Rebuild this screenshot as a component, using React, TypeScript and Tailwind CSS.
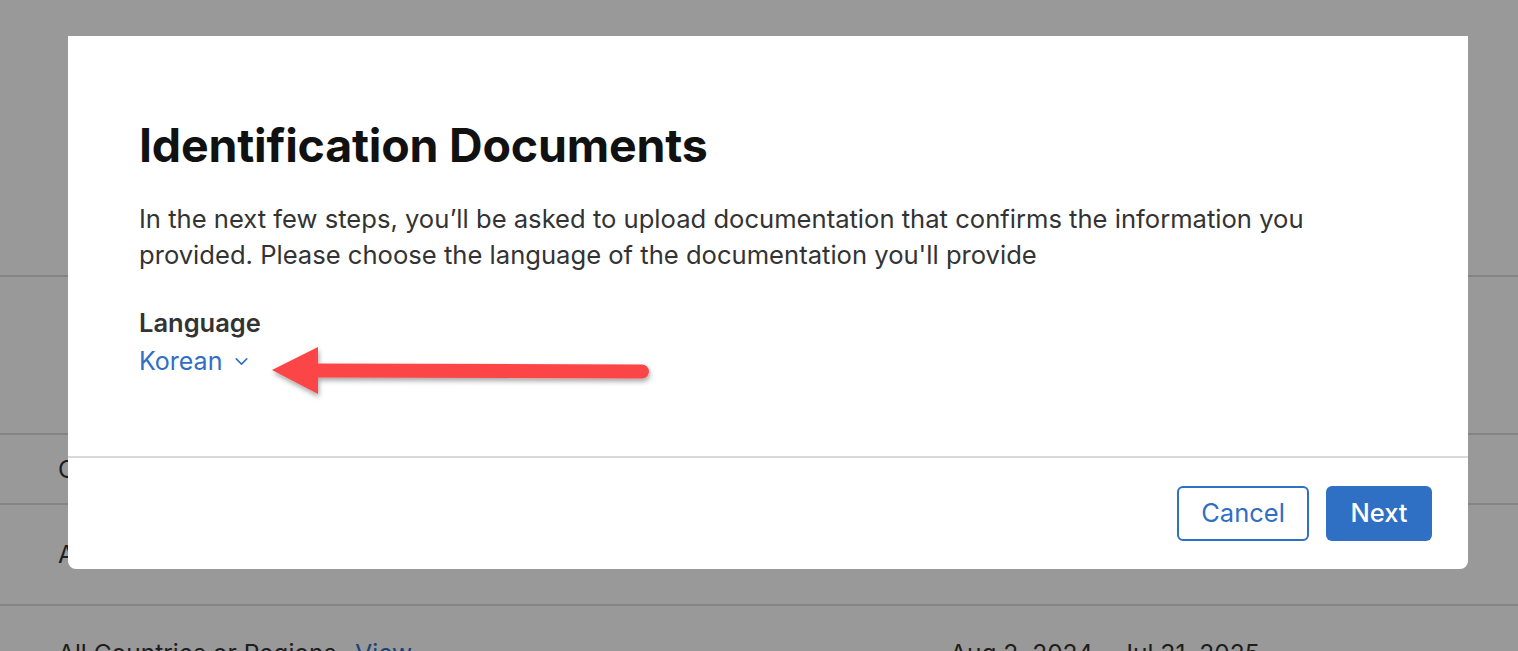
import { ChevronDown } from 'lucide-react';

const rows = [
    { label: 'Contact Information', h: 'h-[158px]', date: '' },
    { label: 'Contact Information', h: 'h-[70px]', date: '' },
    { label: 'Address and Phone Number', h: 'h-[101px]', date: '' },
];

const Arrow = () => (
    <svg
        className="pointer-events-none absolute left-[260px] top-[335px]"
        width="410"
        height="80"
        viewBox="0 0 410 80"
        fill="none"
        xmlns="http://www.w3.org/2000/svg"
    >
        <defs>
            <filter id="arrowShadow" x="-10%" y="-40%" width="120%" height="180%">
                <feDropShadow dx="1" dy="3" stdDeviation="2.5" floodColor="#000" floodOpacity="0.35" />
            </filter>
        </defs>
        <g filter="url(#arrowShadow)">
            <path d="M52 35.5 L382 36.5" stroke="#fc4446" strokeWidth="14" strokeLinecap="round" />
            <path d="M12 35 L58 12 L58 59 Z" fill="#fc4446" />
        </g>
    </svg>
);

export default function App() {
    return (
        <div className="relative h-[651px] w-full overflow-hidden bg-white font-['Inter',sans-serif] text-[24.5px] text-[#333]">
            {/* page behind the dialog */}
            <div className="h-[277px] border-b-2 border-[#ddd]" />
            {rows.map((r, idx) => (
                <div key={idx} className={`${r.h} flex items-center border-b-2 border-[#ddd] pl-[58px]`}>
                    {idx > 0 && <p>{r.label}</p>}
                </div>
            ))}
            <div className="flex pl-[58px] pt-[29px] leading-[36px]">
                <p className="w-[892px]">
                    All Countries or Regions <span className="ml-3 text-[#2f6fc4]">View</span>
                </p>
                <p>Aug 2, 2024 – Jul 31, 2025</p>
            </div>

            <div className="absolute inset-0 bg-black/40" />

            {/* dialog */}
            <div className="absolute left-[68px] top-[36px] w-[1400px] rounded-b-lg bg-white">
                <div className="h-[420px] px-[71px] pt-[84px]">
                    <h1 className="text-[46.5px] font-bold leading-[50px] tracking-[-0.2px] text-[#111]">
                        Identification Documents
                    </h1>
                    <p className="mt-[31px] max-w-[1200px] text-[25.6px] leading-[36px] text-[#333]">
                        In the next few steps, you’ll be asked to upload documentation that confirms the information you provided. Please choose the language of the documentation you'll provide
                    </p>
                    <p className="mt-[32px] text-[25.5px] font-semibold leading-[36px] text-[#333]">Language</p>
                    <button className="flex items-center gap-[9px] text-[25px] leading-[40px] text-[#2f6fc4]">
                        Korean
                        <ChevronDown size={21} strokeWidth={1.8} />
                    </button>
                </div>
                <div className="flex h-[113px] items-center justify-end gap-[17px] border-t-2 border-[#d9d9d9] pr-[36px]">
                    <button className="h-[55px] w-[132px] rounded-md border-2 border-[#2f6fc4] text-[25.5px] text-[#2f6fc4]">
                        Cancel
                    </button>
                    <button className="h-[55px] w-[106px] rounded-md bg-[#2f6fc4] text-[25.5px] font-medium text-white">
                        Next
                    </button>
                </div>
            </div>

            <Arrow />
        </div>
    );
}
